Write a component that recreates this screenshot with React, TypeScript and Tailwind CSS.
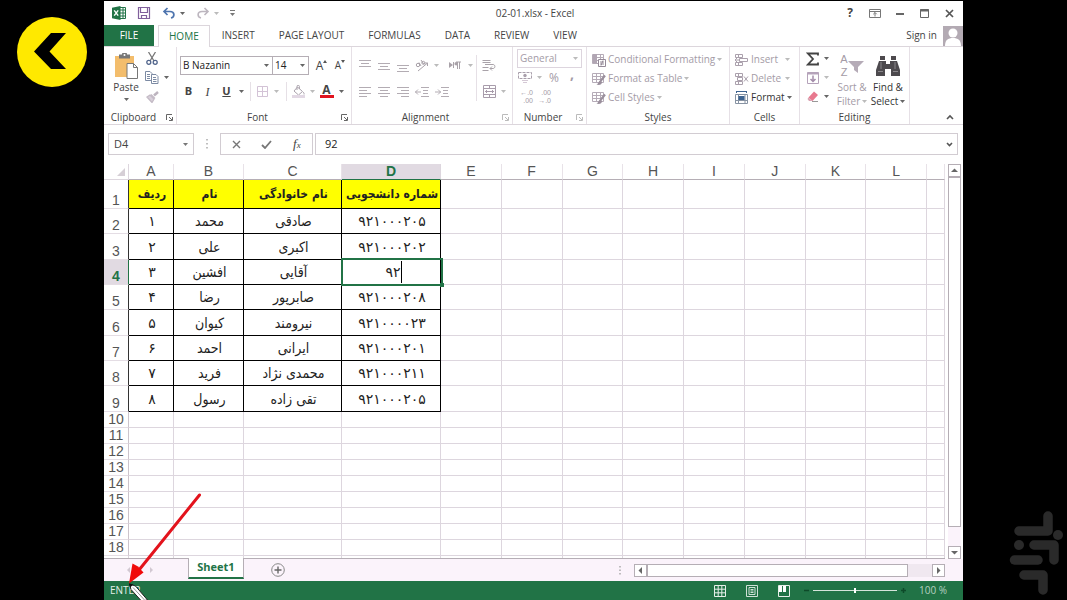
import type { ReactNode } from 'react';

const tabs = ['INSERT', 'PAGE LAYOUT', 'FORMULAS', 'DATA', 'REVIEW', 'VIEW'];

const columns = ['A', 'B', 'C', 'D', 'E', 'F', 'G', 'H', 'I', 'J', 'K', 'L', ''];

const header = ['ردیف', 'نام', 'نام خانوادگی', 'شماره دانشجویی'];

const students = [
  { height: 'h-[25px]', cells: ['۱', 'محمد', 'صادقی', '۹۲۱۰۰۰۲۰۵'] },
  { height: 'h-[26px]', cells: ['۲', 'علی', 'اکبری', '۹۲۱۰۰۰۲۰۲'] },
  { height: 'h-[25px]', cells: ['۳', 'افشین', 'آقایی', '۹۲'] },
  { height: 'h-[25px]', cells: ['۴', 'رضا', 'صابرپور', '۹۲۱۰۰۰۲۰۸'] },
  { height: 'h-[26px]', cells: ['۵', 'کیوان', 'نیرومند', '۹۲۱۰۰۰۰۲۳'] },
  { height: 'h-[25px]', cells: ['۶', 'احمد', 'ایرانی', '۹۲۱۰۰۰۲۰۱'] },
  { height: 'h-[25px]', cells: ['۷', 'فرید', 'محمدی نژاد', '۹۲۱۰۰۰۲۱۱'] },
  { height: 'h-[26px]', cells: ['۸', 'رسول', 'تقی زاده', '۹۲۱۰۰۰۲۰۵'] },
];

const emptyRows = [10, 11, 12, 13, 14, 15, 16, 17, 18];

function Caret({ className = 'text-[#666]' }: { className?: string }) {
  return (
    <svg viewBox="0 0 5 3" className={`h-[3px] w-[5px] shrink-0 ${className}`} fill="currentColor" aria-hidden="true">
      <path d="M0 0h5L2.5 3z" />
    </svg>
  );
}

function Icon({ w = 16, h = 16, children }: { w?: number; h?: number; children: ReactNode }) {
  return (
    <svg width={w} height={h} viewBox={`0 0 ${w} ${h}`} fill="none" className="shrink-0" aria-hidden="true">
      {children}
    </svg>
  );
}

function IconButton({ label, className, children }: { label: string; className: string; children: ReactNode }) {
  return (
    <button type="button" aria-label={label} className={`flex h-[19px] shrink-0 items-center justify-center ${className}`}>
      {children}
    </button>
  );
}

function Separator() {
  return <span className="mx-[4px] h-[19px] w-px shrink-0 bg-[#e6e0e6]" />;
}

function Group({
  title,
  launcher,
  className,
  children,
}: {
  title: string;
  launcher?: 'dark' | 'light';
  className: string;
  children: ReactNode;
}) {
  return (
    <section aria-label={title} className={`flex shrink-0 flex-col border-r border-[#e6e0e6] ${className}`}>
      <div className="flex h-[63px]">{children}</div>
      <div className="flex h-[14px] items-center">
        <span className="flex-1 text-center">{title}</span>
        {launcher && (
          <button
            type="button"
            aria-label={`${title} settings`}
            className={`flex w-[13px] justify-center ${launcher === 'dark' ? 'text-[#666]' : 'text-[#bbb]'}`}
          >
            <Icon w={7} h={7}>
              <path d="M.5 6V.5H6M3 3l3 3M6.5 3v3.5H3" stroke="currentColor" />
            </Icon>
          </button>
        )}
      </div>
    </section>
  );
}

function Lines({ d }: { d: string }) {
  return (
    <Icon w={14} h={12}>
      <path d={d} stroke="#b3acb3" />
    </Icon>
  );
}

function TitleBar() {
  return (
    <header className="flex h-6 items-center text-[10px] text-[#444]">
      <div className="flex flex-1 items-center pl-[7px]">
        <IconButton label="Excel" className="w-4">
          <Icon w={16} h={14}>
            <path d="M9 1.500h5.500v11H9M9 4h5M9 7h5M9 10h5M12 2v10" stroke="#217346" />
            <path d="M1 1.800L9.500 0v14L1 12.200z" fill="#217346" />
            <path d="M3.200 4.300l4 5.400M7.200 4.300l-4 5.400" stroke="#fff" strokeWidth="1.400" />
          </Icon>
        </IconButton>
        <IconButton label="Save" className="ml-[9px] w-4">
          <Icon w={14} h={14}>
            <path d="M1.500 1.500h11v11H1.500zM3.500 1.500v5h7v-5M4.500 12.500V9.500h5v3" stroke="#80609c" strokeWidth="1.200" />
          </Icon>
        </IconButton>
        <IconButton label="Undo" className="ml-[9px] w-4">
          <Icon w={14} h={12}>
            <path d="M5.500 1L2 4.500 5.500 8M2 4.500h6c5 0 5 5.500 1 6.500" stroke="#4d74ae" strokeWidth="1.700" />
          </Icon>
        </IconButton>
        <IconButton label="Undo history" className="w-[10px]"><Caret /></IconButton>
        <IconButton label="Redo" className="ml-[8px] w-4">
          <Icon w={14} h={12}>
            <path d="M8.500 1L12 4.500 8.500 8M12 4.500H6c-5 0-5 5.500-1 6.500" stroke="#bdb6bf" strokeWidth="1.600" />
          </Icon>
        </IconButton>
        <IconButton label="Redo history" className="w-[10px]"><Caret className="text-[#bbb]" /></IconButton>
        <IconButton label="Customize toolbar" className="ml-[6px] w-[10px]">
          <Icon w={5} h={6}>
            <path d="M0 .5h5" stroke="#777" />
            <path d="M0 3h5L2.500 6z" fill="#777" />
          </Icon>
        </IconButton>
      </div>
      <h1 className="shrink-0">02-01.xlsx - Excel</h1>
      <div className="flex flex-1 items-center justify-end gap-1 pr-1">
        <IconButton label="Help" className="w-5 text-[12px] font-bold">?</IconButton>
        <IconButton label="Ribbon display options" className="w-[22px]">
          <Icon w={12} h={9}>
            <path d="M.5.5h11v8H.5zM.5 2.500h11" stroke="#777" />
            <path d="M6 3.500v4M4.300 5.200L6 3.500l1.700 1.700" stroke="#777" />
          </Icon>
        </IconButton>
        <IconButton label="Minimize" className="w-5">
          <Icon w={8} h={8}><path d="M0 5h8" stroke="#666" strokeWidth="2" /></Icon>
        </IconButton>
        <IconButton label="Maximize" className="w-[21px]">
          <Icon w={9} h={9}>
            <path d="M.5.5h8v8H.5z" stroke="#666" />
            <path d="M0 1.500h9" stroke="#666" strokeWidth="2" />
          </Icon>
        </IconButton>
        <IconButton label="Close" className="w-5">
          <Icon w={9} h={9}><path d="M1 1l7 7M8 1L1 8" stroke="#555" strokeWidth="1.700" /></Icon>
        </IconButton>
      </div>
    </header>
  );
}

function TabBar() {
  return (
    <nav className="flex h-[22px] items-stretch border-b border-[#dcd6dc] text-[10px] text-[#444]">
      <button type="button" className="w-[50px] bg-[#217346] text-white">FILE</button>
      <button type="button" className="z-10 -mb-px ml-1 border border-b-0 border-[#dcd6dc] bg-white px-[10px] text-[#217346]">
        HOME
      </button>
      {tabs.map((tab) => (
        <button key={tab} type="button" className="px-3">{tab}</button>
      ))}
      <a href="#" className="ml-auto flex items-center gap-[6px]">
        Sign in
        <svg viewBox="0 0 20 20" className="h-5 w-5 bg-[#b3aab3]" fill="#fff" aria-hidden="true">
          <circle cx="10" cy="7" r="4.500" />
          <path d="M2 20c0-6 3-8 8-8s8 2 8 8z" />
        </svg>
      </a>
    </nav>
  );
}

function Clipboard() {
  return (
    <Group title="Clipboard" launcher="dark" className="w-[73px]">
      <button type="button" className="ml-1 flex w-9 flex-col items-center pt-1">
        <span className="flex h-[29px] items-center">
          <Icon w={26} h={26}>
            <path d="M2 3h19v21H2z" fill="#f3bd6c" />
            <path d="M6 1.500h3a2.500 2.500 0 015 0h3v4H6z" fill="#777" />
            <circle cx="11.500" cy="2" r="1" fill="#fff" />
            <path d="M14 10.500h6.500l4 4v11H14z" fill="#fff" stroke="#777" />
            <path d="M20.500 10.500v4h4" stroke="#777" />
          </Icon>
        </span>
        <span className="leading-[14px]">Paste</span>
        <span className="pt-1"><Caret /></span>
      </button>
      <div className="flex flex-col pt-[2px]">
        <IconButton label="Cut" className="w-4">
          <Icon w={12} h={13}>
            <path d="M2.500 0l5.500 9M9.500 0L4 9" stroke="#777" strokeWidth="1.300" />
            <circle cx="2.800" cy="10.300" r="2" stroke="#51658c" strokeWidth="1.300" />
            <circle cx="9.200" cy="10.300" r="2" stroke="#51658c" strokeWidth="1.300" />
          </Icon>
        </IconButton>
        <div className="flex">
          <IconButton label="Copy" className="w-4">
            <Icon w={14} h={13}>
              <path d="M.5.500h4.500l2 2v7H.5z" fill="#fff" stroke="#7c8aa3" />
              <path d="M2 3.500h3M2 5.500h3M2 7.500h3" stroke="#7c8aa3" />
              <path d="M6.500 3.500h4.500l2 2v7H6.500z" fill="#fff" stroke="#7c8aa3" />
              <path d="M8 6.500h3M8 8.500h3.500M8 10.500h3.500" stroke="#7c8aa3" />
            </Icon>
          </IconButton>
          <IconButton label="Copy options" className="w-3"><Caret /></IconButton>
        </div>
        <IconButton label="Format painter" className="w-4">
          <Icon w={13} h={12}>
            <path d="M12 1L8 4.500" stroke="#bdb4bf" strokeWidth="2.500" />
            <path d="M5 3.500l4 4M1 6l3-2 4 4-2 3.500z" stroke="#c4bbc6" strokeWidth="1.300" fill="#d8d0da" />
          </Icon>
        </IconButton>
      </div>
    </Group>
  );
}

function FontGroup() {
  return (
    <Group title="Font" launcher="dark" className="w-[175px]">
      <div className="flex flex-1 flex-col">
        <div className="mt-[9px] flex h-[19px] pl-[3px]">
          <label className="relative flex w-[93px] items-center border border-[#b5aeb5]">
            <select aria-label="Font name" className="h-full w-full appearance-none pl-[2px] text-[10px] text-[#222]">
              <option>B Nazanin</option>
            </select>
            <span className="pointer-events-none absolute right-[3px]"><Caret /></span>
          </label>
          <label className="relative -ml-px flex w-[37px] items-center border border-[#b5aeb5]">
            <select aria-label="Font size" className="h-full w-full appearance-none pl-[2px] text-[10px] text-[#222]">
              <option>14</option>
            </select>
            <span className="pointer-events-none absolute right-[3px]"><Caret /></span>
          </label>
          <IconButton label="Increase font size" className="ml-1 w-[17px]">
            <span className="text-[12px]">A</span>
            <svg viewBox="0 0 4 3" className="mb-2 h-[3px] w-1" fill="#555" aria-hidden="true"><path d="M0 3h4L2 0z" /></svg>
          </IconButton>
          <IconButton label="Decrease font size" className="ml-[2px] w-4">
            <span>A</span>
            <svg viewBox="0 0 4 3" className="mb-2 h-[3px] w-1" fill="#555" aria-hidden="true"><path d="M0 0h4L2 3z" /></svg>
          </IconButton>
        </div>
        <div className="mt-[7px] flex pl-[2px] text-[11px]">
          <IconButton label="Bold" className="w-[19px] font-bold">B</IconButton>
          <IconButton label="Italic" className="w-[19px] font-['Liberation_Serif',serif] text-[12px] italic">I</IconButton>
          <IconButton label="Underline" className="w-[19px] font-bold underline">U</IconButton>
          <IconButton label="Underline options" className="w-[10px]"><Caret /></IconButton>
          <Separator />
          <IconButton label="Borders" className="w-[15px]">
            <Icon w={11} h={11}>
              <path d="M.5.5h10v10H.5zM5.500.5v10M.5 5.500h10" stroke="#d3c3d6" />
            </Icon>
          </IconButton>
          <IconButton label="Border options" className="w-3"><Caret className="text-[#bbb]" /></IconButton>
          <Separator />
          <IconButton label="Fill color" className="w-[15px]">
            <Icon w={14} h={13}>
              <path d="M5.500 2l5 4.500-4 3.500L2 6z" fill="#fff" stroke="#aaa2ac" />
              <path d="M5 5V1.500a1.200 1.200 0 012.400 0V4M11 7c1.500 1 1 2.500 1 2.500" stroke="#aaa2ac" />
              <path d="M0 11.500h13" stroke="#e2d8e4" strokeWidth="3" />
            </Icon>
          </IconButton>
          <IconButton label="Fill options" className="w-3"><Caret className="text-[#bbb]" /></IconButton>
          <button type="button" aria-label="Font color" className="flex h-[19px] w-[17px] flex-col items-center pt-[2px]">
            <span className="text-[12px] leading-[11px] font-bold">A</span>
            <span className="h-[3px] w-[14px] bg-[#e0141f]" />
          </button>
          <IconButton label="Font color options" className="w-3"><Caret /></IconButton>
        </div>
      </div>
    </Group>
  );
}

function Alignment() {
  return (
    <Group title="Alignment" launcher="light" className="w-[161px]">
      <div className="flex flex-col pl-[3px]">
        <div className="mt-[9px] flex">
          <IconButton label="Top align" className="w-[19px]"><Lines d="M1 .5h12M3 3.500h8M1 6.500h12" /></IconButton>
          <IconButton label="Middle align" className="w-[19px]"><Lines d="M1 3.500h12M3 6.500h8M1 9.500h12" /></IconButton>
          <IconButton label="Bottom align" className="w-[19px]"><Lines d="M1 5.500h12M3 8.500h8M1 11.500h12" /></IconButton>
          <IconButton label="Orientation" className="w-[20px]">
            <Icon w={14} h={13}>
              <path d="M3 12L12.500 4M9.500 4h3v3" stroke="#a9a2a9" />
              <circle cx="3" cy="6" r="1.700" stroke="#a9a2a9" />
              <path d="M4 3.500l2 3.500M6 1l3 4.500" stroke="#a9a2a9" />
              <circle cx="8.300" cy="3.800" r="1.500" stroke="#a9a2a9" />
            </Icon>
          </IconButton>
          <IconButton label="Orientation options" className="w-[9px]"><Caret className="text-[#bbb]" /></IconButton>
          <IconButton label="Text direction" className="ml-1 w-[19px]">
            <Icon w={12} h={9}>
              <path d="M0 1l4 3-4 3z" fill="#a9a2a9" />
              <path d="M4.500 1v6M8.500 1v7M10.500 1v7M7 1h5" stroke="#a9a2a9" />
              <circle cx="7.200" cy="2.800" r="1.800" fill="#a9a2a9" />
            </Icon>
          </IconButton>
          <IconButton label="Direction options" className="w-3"><Caret className="text-[#bbb]" /></IconButton>
        </div>
        <div className="mt-[7px] flex">
          <IconButton label="Align left" className="w-[19px]"><Lines d="M1 1.500h12M1 4.500h8M1 7.500h12M1 10.500h8" /></IconButton>
          <IconButton label="Center" className="w-[19px]"><Lines d="M1 1.500h12M3 4.500h8M1 7.500h12M3 10.500h8" /></IconButton>
          <IconButton label="Align right" className="w-[19px]"><Lines d="M1 1.500h12M5 4.500h8M1 7.500h12M5 10.500h8" /></IconButton>
          <IconButton label="Decrease indent" className="w-[20px]"><Lines d="M6 1.500h8M8 4.500h5M8 7.500h5M6 10.500h8M0 6h6M3 3.500L.5 6 3 8.500" /></IconButton>
          <IconButton label="Increase indent" className="w-[19px]"><Lines d="M6 1.500h8M8 4.500h5M8 7.500h5M6 10.500h8M0 6h6M3 3.500L5.500 6 3 8.500" /></IconButton>
        </div>
      </div>
      <span className="mt-2 h-[46px] w-px bg-[#e6e0e6]" />
      <div className="flex flex-col pl-[3px]">
        <IconButton label="Wrap text" className="mt-[9px] w-[18px]">
          <Icon w={14} h={13}>
            <path d="M.5 1.500h8M.5 3.500h8M.5 8.500h6M.5 11.500h6M3 5.500h8c2.500 0 2.500 4 0 4H8M10 7.500l-2 2 2 2" stroke="#a9a2a9" />
          </Icon>
        </IconButton>
        <div className="mt-[7px] flex">
          <IconButton label="Merge and center" className="w-[18px]">
            <Icon w={13} h={13}>
              <path d="M.5.5h12v12H.5zM.5 3.500h12M.5 9.500h12M6.500.5v3M6.500 9.500v3M2 6.500h9M4 5L2.500 6.500 4 8M9 5l1.500 1.500L9 8" stroke="#a89cab" />
            </Icon>
          </IconButton>
          <IconButton label="Merge options" className="w-[10px]"><Caret className="text-[#bbb]" /></IconButton>
        </div>
      </div>
    </Group>
  );
}

function NumberGroup() {
  return (
    <Group title="Number" launcher="light" className="w-[74px]">
      <div className="flex flex-1 flex-col pl-1 text-[#a49ba6]">
        <label className="relative mt-[2px] flex h-[19px] w-[65px] items-center border border-[#ddd5de]">
          <select aria-label="Number format" className="h-full w-full appearance-none pl-[2px] text-[10px]">
            <option>General</option>
          </select>
          <span className="pointer-events-none absolute right-[3px]"><Caret className="text-[#bbb]" /></span>
        </label>
        <div className="flex">
          <IconButton label="Accounting format" className="w-[17px]">
            <Icon w={15} h={13}>
              <path d="M.5 1.500h13v6H.5z" stroke="#a99fab" strokeDasharray="3 1" />
              <circle cx="7" cy="4.500" r="1.700" fill="#a99fab" />
              <path d="M4 9.500h6M5 11.500h4" stroke="#d5c9d6" />
            </Icon>
          </IconButton>
          <IconButton label="Accounting options" className="w-[10px]"><Caret className="text-[#bbb]" /></IconButton>
          <IconButton label="Percent style" className="w-[20px] text-[12px]">%</IconButton>
          <IconButton label="Comma style" className="w-4 pb-2 text-[14px] font-bold">,</IconButton>
        </div>
        <div className="flex gap-[2px] pt-[2px] font-['Liberation_Sans',sans-serif] text-[7px] leading-[8px]">
          <button type="button" aria-label="Increase decimal" className="flex w-4 flex-col items-end">
            <span>←.0</span>
            <span>.00</span>
          </button>
          <button type="button" aria-label="Decrease decimal" className="flex w-4 flex-col items-end">
            <span>.00</span>
            <span>→.0</span>
          </button>
        </div>
      </div>
    </Group>
  );
}

function StyleIcon({ conditional }: { conditional?: boolean }) {
  return (
    <Icon w={14} h={14}>
      <path d="M.5 1.500h11v9H.5zM.5 4.500h11M.5 7.500h11M4.500 1.500v9M8.500 1.500v9" stroke="#b5abb7" />
      {conditional ? (
        <>
          <path d="M1 1h4v9H1z" fill="#b1a6b3" />
          <path d="M6.500 6.500h7v7h-7z" fill="#fff" stroke="#958a98" />
          <path d="M8 9h4M8 11h4M11 7.500l-2 5" stroke="#958a98" />
        </>
      ) : (
        <>
          <path d="M13 3.500L8.500 9" stroke="#9a8f9c" strokeWidth="2.200" />
          <path d="M8.500 8.500c-2 0-1.500 3-4 4 3 1 5.500 0 5.500-2.500z" fill="#9a8f9c" />
        </>
      )}
    </Icon>
  );
}

function Styles() {
  return (
    <Group title="Styles" className="w-[143px]">
      <div className="flex flex-col pt-[3px] pl-[5px] text-[#a49ba6]">
        {['Conditional Formatting', 'Format as Table', 'Cell Styles'].map((item, i) => (
          <button key={item} type="button" className="flex h-[19px] items-center gap-[2px] whitespace-nowrap">
            <StyleIcon conditional={i === 0} />
            {item}
            <Caret className="text-[#bbb]" />
          </button>
        ))}
      </div>
    </Group>
  );
}

function Cells() {
  return (
    <Group title="Cells" className="w-[70px]">
      <div className="flex flex-col pt-[3px] pl-[5px] text-[#a49ba6]">
        <button type="button" className="flex h-[19px] w-[55px] items-center gap-[2px]">
          <Icon w={14} h={14}>
            <path d="M.5 1.500h7v3h-7zM.5 9.500h7v3h-7zM3.500 1.500v3M3.500 9.500v3M4.500 5.500h8v3h-8zM0 7h4M2 5L0 7l2 2" stroke="#aaa0ac" />
          </Icon>
          <span className="flex-1 text-left">Insert</span>
          <Caret className="text-[#bbb]" />
        </button>
        <button type="button" className="flex h-[19px] w-[55px] items-center gap-[2px]">
          <Icon w={14} h={14}>
            <path d="M.5 1.500h7v3h-7zM.5 9.500h7v3h-7zM3.500 1.500v3M3.500 9.500v3M2.500 5.500h5v3h-5zM9 4.500l4 5M13 4.500l-4 5" stroke="#aaa0ac" />
          </Icon>
          <span className="flex-1 text-left">Delete</span>
          <Caret className="text-[#bbb]" />
        </button>
        <button type="button" className="flex h-[19px] w-[55px] items-center gap-[2px] text-[#333]">
          <Icon w={14} h={14}>
            <path d="M1 .5h11M1.500 0v2M11.500 0v2" stroke="#3e6491" />
            <path d="M.5 3.500h12v9H.5zM.5 9.500h12M3.500 3.500v9M10 3.500v9" stroke="#8793a3" />
            <path d="M3.500 5h6v4h-6z" fill="#3e6491" />
          </Icon>
          <span className="flex-1 text-left">Format</span>
          <Caret />
        </button>
      </div>
    </Group>
  );
}

function Editing() {
  return (
    <Group title="Editing" className="w-[110px]">
      <div className="flex w-[34px] flex-col pt-[2px] pl-[6px]">
        <button type="button" aria-label="AutoSum" className="flex h-[19px] items-center gap-1">
          <Icon w={14} h={14}>
            <path d="M12 3.500V1.500H2L7 7l-5 5.500h10v-2" stroke="#444" strokeWidth="1.800" />
          </Icon>
          <Caret />
        </button>
        <button type="button" aria-label="Fill" className="flex h-[19px] items-center gap-1">
          <Icon w={14} h={14}>
            <path d="M1.500 1.500h11v11h-11z" stroke="#b5a3ba" />
            <path d="M1.500 2.500h11" stroke="#b5a3ba" strokeWidth="2" />
            <path d="M7 4.500v6M4.500 8L7 10.500 9.500 8" stroke="#a48dab" strokeWidth="1.500" />
          </Icon>
          <Caret className="text-[#bbb]" />
        </button>
        <button type="button" aria-label="Clear" className="flex h-[19px] items-center gap-1">
          <Icon w={14} h={14}>
            <path d="M8 1.500l4 3.500-5.500 6-4-3.500z" fill="#e8798f" />
            <path d="M2.500 7.500l4 3.500H3L1.500 9z" fill="#d9a2b1" />
            <path d="M6 11.500h6" stroke="#999" />
          </Icon>
          <Caret />
        </button>
      </div>
      <button type="button" className="flex w-9 flex-col items-center pt-1 leading-[14px] text-[#a49ba6]">
        <span className="flex h-[29px] items-center">
          <span className="flex flex-col font-['Liberation_Sans',sans-serif] text-[11px] leading-[13px]">
            <span>A</span>
            <span>Z</span>
          </span>
          <Icon w={16} h={16}>
            <path d="M0 3h16l-6 6v6l-4-3V9z" fill="#b5abb7" />
          </Icon>
        </span>
        <span>Sort &amp;</span>
        <span className="flex items-center gap-[2px]">Filter <Caret className="text-[#bbb]" /></span>
      </button>
      <button type="button" className="flex w-9 flex-col items-center pt-1 leading-[14px] text-[#333]">
        <span className="flex h-[29px] items-center">
          <Icon w={24} h={22}>
            <path d="M4 1h5v4H4zM15 1h5v4h-5zM3 6h7v3h4V6h7l3 9v6h-9v-7H9v7H0v-6z" fill="#4d4a4e" />
            <path d="M2 16.500h5M17 16.500h5M5 7v7M19 7v7" stroke="#8a878b" />
          </Icon>
        </span>
        <span>Find &amp;</span>
        <span className="flex items-center gap-[2px]">Select <Caret /></span>
      </button>
    </Group>
  );
}

function FormulaBar() {
  return (
    <div className="flex h-[39px] items-start pt-2 pr-[5px] pl-1 text-[11px] text-[#444]">
      <div className="flex h-[22px] w-[86px] shrink-0 border border-[#d2ccd2]">
        <input aria-label="Name box" defaultValue="D4" className="w-full min-w-0 pl-[5px] text-[11px]" />
        <button type="button" aria-label="Show names" className="flex w-4 shrink-0 items-center justify-center">
          <Caret className="text-[#777]" />
        </button>
      </div>
      <span className="flex h-[22px] w-[26px] shrink-0 items-center justify-center">
        <Icon w={2} h={12}><path d="M1 1v10" stroke="#aaa" strokeWidth="1.500" strokeDasharray="1.500 2.500" /></Icon>
      </span>
      <div className="flex h-[22px] w-[93px] shrink-0 border border-[#d2ccd2]">
        <button type="button" aria-label="Cancel" className="flex flex-1 items-center justify-center">
          <Icon w={9} h={9}><path d="M1 1l7 7M8 1L1 8" stroke="#777" strokeWidth="1.400" /></Icon>
        </button>
        <button type="button" aria-label="Enter" className="flex flex-1 items-center justify-center">
          <Icon w={11} h={9}><path d="M1 5l3 3 6-7" stroke="#777" strokeWidth="1.800" /></Icon>
        </button>
        <button
          type="button"
          aria-label="Insert function"
          className="flex-1 font-['Liberation_Serif',serif] text-[13px] italic"
        >
          f<span className="text-[9px]">x</span>
        </button>
      </div>
      <div className="ml-[2px] flex h-[22px] min-w-0 flex-1 border border-[#d2ccd2]">
        <input aria-label="Formula" defaultValue="92" className="min-w-0 flex-1 pl-[9px] text-[11px] text-[#222]" />
        <button type="button" aria-label="Expand formula bar" className="flex w-4 items-center justify-center">
          <Icon w={7} h={5}><path d="M1 1l2.500 2.500L6 1" stroke="#555" strokeWidth="1.600" /></Icon>
        </button>
      </div>
    </div>
  );
}

function RowHeader({ n, className = '' }: { n: number; className?: string }) {
  return (
    <th scope="row" className={`border-r border-b border-b-[#e4dde4] p-0 align-bottom text-[14px] leading-[15px] ${className}`}>
      {n}
    </th>
  );
}

function EmptyCells({ count }: { count: number }) {
  return (
    <>
      {Array.from({ length: count }, (_, i) => (
        <td key={i} className="border-r border-b border-[#ddd6de] p-0" />
      ))}
    </>
  );
}

function Sheet() {
  return (
    <table className="w-full table-fixed border-separate border-spacing-0 border-b border-[#b5aeb5] font-['Liberation_Sans',sans-serif] text-[14px] text-[#555]">
      <colgroup>
        <col className="w-[25px]" />
        <col className="w-[45px]" />
        <col className="w-[70px]" />
        <col className="w-[98px]" />
        <col className="w-[99px]" />
        <col span={8} />
        <col className="w-[18px]" />
      </colgroup>
      <thead>
        <tr className="h-4 leading-[15px]">
          <th aria-label="Select all" className="border-r border-b border-[#ddd6de] p-0">
            <svg viewBox="0 0 8 8" className="mr-[3px] ml-auto h-2 w-2" fill="#d6cfd6" aria-hidden="true"><path d="M8 0v8H0z" /></svg>
          </th>
          {columns.map((c) => (
            <th
              key={c}
              scope="col"
              className={
                c === 'D'
                  ? 'border-r border-b border-r-[#ddd6de] border-b-[#217346] bg-[#e1dae2] p-0 font-bold text-[#217346]'
                  : 'border-r border-b border-r-[#e8e2e8] border-b-[#b5aeb5] p-0 font-normal'
              }
            >
              {c}
            </th>
          ))}
        </tr>
      </thead>
      <tbody>
        <tr className="h-[29px]">
          <RowHeader n={1} className="border-r-[#333] font-normal" />
          {header.map((h) => (
            <td
              key={h}
              dir="rtl"
              className="border-r border-b border-black bg-[#ffff00] p-0 text-center font-['DejaVu_Sans_Condensed','DejaVu_Sans',sans-serif] text-[12px] leading-[20px] font-bold whitespace-nowrap text-[#222]"
            >
              {h}
            </td>
          ))}
          <EmptyCells count={9} />
        </tr>
        {students.map((s, i) => (
          <tr key={i} className={s.height}>
            <RowHeader
              n={i + 2}
              className={i === 2 ? 'border-r-[#217346] bg-[#e1dae2] font-bold text-[#217346]' : 'border-r-[#333] font-normal'}
            />
            {s.cells.map((cell, j) => (
              <td
                key={j}
                dir="rtl"
                className={
                  j === 0 || j === 3
                    ? "relative border-r border-b border-black p-0 text-center font-['DejaVu_Sans',sans-serif] text-[14px] leading-[20px] whitespace-nowrap text-[#222]"
                    : "border-r border-b border-black p-0 text-center font-['DejaVu_Sans_Condensed','DejaVu_Sans',sans-serif] text-[14px] leading-[20px] whitespace-nowrap text-[#222]"
                }
              >
                {i === 2 && j === 3 ? (
                  <>
                    <div dir="ltr" className="flex items-center justify-center">
                      <input aria-label="D4" defaultValue={cell} className="w-[18px] text-right" />
                      <span className="h-[22px] w-px bg-black" />
                    </div>
                    <span className="pointer-events-none absolute -inset-[2px] z-10 border-2 border-[#217346]" />
                    <span className="absolute -right-[3px] -bottom-[3px] z-10 h-1 w-1 bg-[#217346]" />
                  </>
                ) : (
                  cell
                )}
              </td>
            ))}
            <EmptyCells count={9} />
          </tr>
        ))}
        {emptyRows.map((n) => (
          <tr key={n} className="h-4">
            <RowHeader n={n} className="border-r-[#ccc4cc] font-normal" />
            <EmptyCells count={13} />
          </tr>
        ))}
        <tr className="h-[2px]">
          {Array.from({ length: 14 }, (_, i) => (
            <td key={i} className="border-r border-[#ddd6de] p-0" />
          ))}
        </tr>
      </tbody>
    </table>
  );
}

function ScrollButton({ label, d }: { label: string; d: string }) {
  return (
    <button
      type="button"
      aria-label={label}
      className="flex h-[13px] w-[13px] shrink-0 items-center justify-center border border-[#b5aeb5] bg-white"
    >
      <Icon w={7} h={7}><path d={d} fill="#666" /></Icon>
    </button>
  );
}

function SheetBar() {
  return (
    <div className="flex h-[22px] items-center bg-[#fbf3fb]">
      <div className="flex w-[84px] shrink-0 gap-[18px] pl-[22px] text-[#d2c8d2]">
        <button type="button" aria-label="Previous sheet"><Icon w={5} h={6}><path d="M4 0v6L1 3z" fill="currentColor" /></Icon></button>
        <button type="button" aria-label="Next sheet"><Icon w={5} h={6}><path d="M1 0v6l3-3z" fill="currentColor" /></Icon></button>
      </div>
      <button
        type="button"
        className="-mt-px h-[21px] w-[56px] shrink-0 self-start border-x border-b-2 border-x-[#b5aeb5] border-b-[#217346] bg-white text-[11px] font-bold text-[#217346]"
      >
        Sheet1
      </button>
      <button type="button" aria-label="New sheet" className="ml-[27px]">
        <Icon w={14} h={14}>
          <circle cx="7" cy="7" r="6.300" stroke="#888" />
          <path d="M7 3.500v7M3.500 7h7" stroke="#666" strokeWidth="1.400" />
        </Icon>
      </button>
      <div className="ml-auto flex items-center pr-[18px]">
        <Icon w={2} h={10}><path d="M1 1v9" stroke="#aaa" strokeWidth="1.500" strokeDasharray="1.500 2" /></Icon>
        <span className="w-[13px]" />
        <ScrollButton label="Scroll left" d="M5 0v7L1.500 3.500z" />
        <div className="w-[285px] bg-[#f0e8f0]">
          <div className="h-[13px] w-[261px] border border-[#b5aeb5] bg-white" />
        </div>
        <ScrollButton label="Scroll right" d="M2 0v7l3.500-3.500z" />
      </div>
    </div>
  );
}

function StatusBar() {
  return (
    <footer className="flex h-[19px] items-center bg-[#217346] pr-4 pl-[6px] text-[10px] text-[#e6efe9]">
      <span>ENTER</span>
      <div className="ml-auto flex items-center">
        <IconButton label="Normal view" className="w-8">
          <Icon w={12} h={12}>
            <path d="M.5.5h11v11H.5zM4.200.5v11M7.800.5v11M.5 4.200h11M.5 7.800h11" stroke="#e6efe9" />
          </Icon>
        </IconButton>
        <IconButton label="Page layout view" className="w-8">
          <Icon w={12} h={12}>
            <path d="M.5.5h11v11H.5zM3 2.500h6v7H3zM4.500 4.500h3M4.500 6h3M4.500 7.500h3" stroke="#cfe0d6" />
          </Icon>
        </IconButton>
        <IconButton label="Page break view" className="w-8">
          <Icon w={12} h={12}>
            <path d="M.5.5h11v11H.5z" stroke="#e6efe9" />
            <path d="M1 1h3v6H1zM5 1h3v6H5z" fill="#fff" />
          </Icon>
        </IconButton>
        <button type="button" aria-label="Zoom out" className="ml-[3px]">
          <Icon w={7} h={7}><path d="M1 3.500h5" stroke="#0d4a29" strokeWidth="1.500" /></Icon>
        </button>
        <input
          type="range"
          aria-label="Zoom"
          min={0}
          max={200}
          defaultValue={100}
          className="mx-[3px] h-[7px] w-[84px] appearance-none bg-transparent [&::-webkit-slider-runnable-track]:h-px [&::-webkit-slider-runnable-track]:bg-[#d5e4da] [&::-webkit-slider-thumb]:-mt-[2px] [&::-webkit-slider-thumb]:h-[5px] [&::-webkit-slider-thumb]:w-[2px] [&::-webkit-slider-thumb]:appearance-none [&::-webkit-slider-thumb]:bg-white"
        />
        <button type="button" aria-label="Zoom in" className="mr-3">
          <Icon w={7} h={7}><path d="M1 3.500h5M3.500 1v5" stroke="#0d4a29" strokeWidth="1.500" /></Icon>
        </button>
        <span className="text-[#b5d0c0]">100 %</span>
      </div>
    </footer>
  );
}

// arrow and pen drawn over the lower left corner of the sheet
function Annotation() {
  return (
    <svg viewBox="0 0 90 110" className="pointer-events-none absolute bottom-0 left-[20px] h-[110px] w-[90px]" fill="none" aria-hidden="true">
      <path d="M75.500 5L15 80" stroke="#e3131c" strokeWidth="3" strokeLinecap="round" />
      <path d="M5 93.500l3.500-20 5.500 3 5.500 6z" fill="#f00a0a" />
      <path d="M5.500 94l1.500 5.500L17.500 111l6-1L11.500 96z" fill="#fff" stroke="#222" />
      <path d="M5 93.500l1 4 3.500-3z" fill="#111" />
      <path d="M9 97.500l11.500 12.500" stroke="#777" strokeWidth=".8" />
    </svg>
  );
}

export default function App() {
  return (
    <div className="flex min-h-screen bg-black pt-px font-['Open_Sans',sans-serif]">
      <aside className="w-[104px] shrink-0 pt-4 pl-[17px]">
        <button type="button" aria-label="Back" className="block">
          <svg viewBox="0 0 70 70" className="h-[70px] w-[70px]" aria-hidden="true">
            <circle cx="35" cy="35" r="35" fill="#ffe900" />
            <path d="M34 16h15L32.500 34.500 49 52H34L17 34.500z" fill="#000" />
          </svg>
        </button>
      </aside>
      <main className="relative flex min-w-0 flex-1 flex-col overflow-hidden bg-white">
        <TitleBar />
        <TabBar />
        <div className="flex h-[78px] border-b border-[#dcd6dc] text-[10px] text-[#444]">
          <Clipboard />
          <FontGroup />
          <Alignment />
          <NumberGroup />
          <Styles />
          <Cells />
          <Editing />
          <button type="button" aria-label="Collapse ribbon" className="ml-auto self-end pr-[9px] pb-1">
            <Icon w={8} h={6}><path d="M1 5l3-3 3 3" stroke="#555" strokeWidth="1.600" /></Icon>
          </button>
        </div>
        <FormulaBar />
        <div className="flex flex-1">
          <div className="min-w-0 flex-1"><Sheet /></div>
          <div className="flex w-[18px] shrink-0 flex-col items-center bg-white">
            <ScrollButton label="Scroll up" d="M0 5h7L3.500 1.500z" />
            <div className="flex w-[13px] flex-1 flex-col bg-[#fbf3fb] pb-[19px]">
              <div className="flex-1 border border-[#b5aeb5] bg-white" />
            </div>
            <ScrollButton label="Scroll down" d="M0 2h7L3.500 5.500z" />
          </div>
        </div>
        <SheetBar />
        <StatusBar />
        <Annotation />
      </main>
      <aside className="flex w-[104px] shrink-0 flex-col items-end justify-end pr-1 pb-[5px]">
        <svg viewBox="0 0 54 84" className="h-[84px] w-[54px]" fill="none" stroke="#2a2a2a" strokeWidth="9.500" strokeLinecap="round" strokeLinejoin="round" aria-hidden="true">
          <path d="M39 5v15H10" />
          <path d="M25 34h20v15" />
          <path d="M5.500 49H29" />
          <path d="M15 64h19v15" />
          <circle cx="49" cy="24" r="5" fill="#2a2a2a" stroke="none" />
          <circle cx="10" cy="34" r="5" fill="#2a2a2a" stroke="none" />
        </svg>
      </aside>
    </div>
  );
}
